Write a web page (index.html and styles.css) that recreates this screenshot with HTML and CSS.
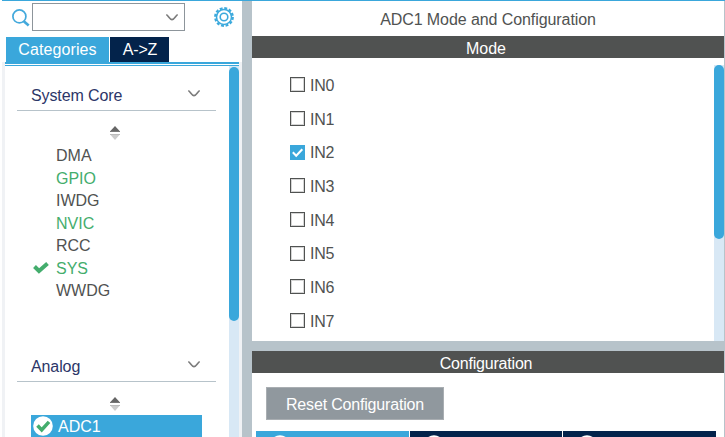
FILE: index.html
```html
<!DOCTYPE html>
<html lang="en">
<head>
<meta charset="utf-8">
<title>ADC1 Mode and Configuration</title>
<link rel="stylesheet" href="styles.css">
</head>
<body>
<svg width="0" height="0" class="defs">
  <symbol id="chevron" viewBox="0 0 12 7"><path d="M.3.6 C2.5 1.7 3.5 5.6 6 5.6 S9.5 1.7 11.7.6" fill="none" stroke="#7b7b7b" stroke-width="1.6"/></symbol>
  <symbol id="sort" viewBox="0 0 10 14"><path d="M5 0 9.6 5H.4z" fill="#666"/><path d="M0 5.5h10" stroke="#777"/><path d="M0 8.5h10" stroke="#bbb"/><path d="M.6 9h8.8L5 14z" fill="#ccc"/></symbol>
  <symbol id="ok" viewBox="0 0 20 20"><circle cx="10" cy="10" r="9.8" fill="#fff"/><path d="M4.5 9.5 8.7 14 16 5.8" fill="none" stroke="#44ad6d" stroke-width="3.5"/></symbol>
</svg>
<div class="app">
  <aside class="sidebar">
    <div class="search">
      <svg class="lens" viewBox="0 0 18 18"><circle cx="7.4" cy="7.4" r="6.5" fill="none" stroke="#43a9dc" stroke-width="1.7"/><path d="M11.5 12 16.7 16.5" stroke="#43a9dc" stroke-width="2.6"/></svg>
      <div class="combo"><svg class="chev"><use href="#chevron"/></svg></div>
      <svg class="gear" viewBox="0 0 20 20" fill="none" stroke="#3ba9dc"><circle cx="10" cy="10" r="8.8" stroke-width="2.2" stroke-dasharray="2.9 1.71"/><circle cx="10" cy="10" r="7.5" stroke-width="1.5"/><circle cx="10" cy="10" r="3.8" stroke-width="1.6"/></svg>
    </div>
    <div class="tabs"><span class="tab on">Categories</span><span class="tab">A-&gt;Z</span></div>
    <div class="tree">
      <div class="groups">
        <section class="group core">
          <h2>System Core<svg class="chev"><use href="#chevron"/></svg></h2>
          <svg class="sort"><use href="#sort"/></svg>
          <ul>
            <li>DMA</li>
            <li class="set">GPIO</li>
            <li>IWDG</li>
            <li class="set">NVIC</li>
            <li>RCC</li>
            <li class="set"><svg class="tick" viewBox="0 0 16 12"><path d="M1.5 4.5 6 9 14.5 1.5" fill="none" stroke="#44ad6d" stroke-width="4"/></svg>SYS</li>
            <li>WWDG</li>
          </ul>
        </section>
        <section class="group">
          <h2>Analog<svg class="chev"><use href="#chevron"/></svg></h2>
          <svg class="sort"><use href="#sort"/></svg>
          <div class="selected"><svg class="ok"><use href="#ok"/></svg>ADC1</div>
        </section>
      </div>
      <div class="track"><div class="thumb"></div></div>
    </div>
  </aside>
  <main class="detail">
    <h1>ADC1 Mode and Configuration</h1>
    <div class="bar mode-bar">Mode</div>
    <div class="mode">
      <div class="inputs">
        <label><i class="box"></i><span>IN0</span></label>
        <label><i class="box"></i><span>IN1</span></label>
        <label><i class="box checked"><svg viewBox="0 0 15 15"><path d="M2.8 7.2 6.2 10.8 12.3 4.2" fill="none" stroke="#fff" stroke-width="2"/></svg></i><span>IN2</span></label>
        <label><i class="box"></i><span>IN3</span></label>
        <label><i class="box"></i><span>IN4</span></label>
        <label><i class="box"></i><span>IN5</span></label>
        <label><i class="box"></i><span>IN6</span></label>
        <label><i class="box"></i><span>IN7</span></label>
      </div>
      <div class="track"><div class="thumb"></div></div>
    </div>
    <div class="splitter"></div>
    <div class="bar">Configuration</div>
    <div class="config">
      <button class="reset">Reset Configuration</button>
      <div class="cards">
        <div class="card on"><svg class="ok"><use href="#ok"/></svg></div>
        <div class="card"><svg class="ok"><use href="#ok"/></svg></div>
        <div class="card"><svg class="ok"><use href="#ok"/></svg></div>
      </div>
    </div>
  </main>
</div>
</body>
</html>
```
FILE: styles.css
```css
* { box-sizing: border-box; margin: 0; padding: 0; }
body { width: 725px; height: 437px; overflow: hidden; background: #fff; color: #505251; font: 16px/22px "Liberation Sans", Arial, sans-serif; }
svg { display: block; flex: none; }
.defs { position: absolute; }
.app { display: flex; height: 437px; margin-left: 2px; border-top: 1px solid #3aa7db; }

.sidebar { width: 240px; flex: none; display: flex; flex-direction: column; }
.search { flex: none; display: flex; height: 36px; padding: 2px 0 0 10px; }
.lens { width: 18px; height: 18px; margin: 6px 2px 0 0; }
.combo { width: 153px; height: 28px; border: 1px solid #8d959b; display: flex; justify-content: flex-end; padding: 10px 6px 0 0; }
.chev { width: 12px; height: 7px; }
.gear { width: 20px; height: 20px; margin: 4px 0 0 29px; }
.tabs { flex: none; display: flex; gap: 1px; padding-left: 4px; height: 25px; line-height: 25px; color: #fff; }
.tab { width: 59px; background: #03234b; text-align: center; letter-spacing: -.2px; padding-left: 1px; }
.tab.on { width: 103px; background: #3aa7db; letter-spacing: .1px; padding-left: 0; }

.tree { flex: 1; min-height: 0; overflow: hidden; display: flex; border: solid #f0f2f5; border-width: 0 3px; background: linear-gradient(#3aa7db 2px, #fff 2px, #fff 3px, #3aa7db 3px, #3aa7db 4px, transparent 4px) border-box; }
.groups { width: 224px; padding: 18px 0 0 12px; }
.group { width: 199px; }
.core { height: 271px; }
h2 { display: flex; justify-content: space-between; align-items: center; height: 31px; padding: 1px 16px 0 14px; border-bottom: 1px solid #b7c3ca; font-size: 16px; font-weight: 400; color: #2c3668; letter-spacing: -.1px; }
h2 .chev { margin-top: -4px; }
.sort { width: 10px; height: 14px; margin: 15px auto 4px 93px; }
ul { list-style: none; padding: 1px 0 0 15px; }
li { height: 22.5px; line-height: 22.5px; padding-left: 24px; display: flex; }
.set { color: #44ad6d; }
.tick { width: 16px; height: 12px; margin: 4px 7px 0 -23px; }
.selected { width: 171px; height: 23px; margin-left: 14px; background: #3aa7db; color: #fff; display: flex; gap: 5px; padding-left: 2px; line-height: 23px; }
.ok { width: 20px; height: 20px; margin-top: 1px; }

.track { display: flow-root; width: 10px; flex: none; background: #d8e8f5; }
.thumb { border-radius: 5px; background: #3aa7db; }
.tree .track { margin-top: 4px; }
.tree .thumb { height: 254px; margin-top: 1px; }

.detail { flex: 1; border-left: 10px solid #b7c3ca; border-right: 1px solid #b7c3ca; display: flex; flex-direction: column; }
h1 { height: 35px; line-height: 38px; text-align: center; font-size: 16px; font-weight: 400; letter-spacing: -.08px; }
.bar { height: 22px; line-height: 26px; background: #505251; color: #fff; text-align: center; padding-right: 4px; letter-spacing: -.2px; }
.mode-bar { letter-spacing: 0; }
.mode { height: 283px; display: flex; justify-content: space-between; }
.inputs { padding: 10px 0 0 38px; }
label { height: 33.7px; display: flex; align-items: center; gap: 5px; letter-spacing: -.2px; }
label span { padding-top: 2px; }
.box { width: 15px; height: 15px; border: 1px solid #505251; box-shadow: inset 0 0 0 1px #d5d5d5; }
.checked { background: #3aa7db; border-color: #3aa7db; box-shadow: none; }
.checked svg { width: 15px; height: 15px; margin: -1px; }
.mode .track { margin-top: 7px; }
.mode .thumb { height: 174px; }
.splitter { height: 10px; background: #b7c3ca; }
.config { flex: 1; padding: 14px 8px 0 4px; overflow: hidden; }
.reset { display: block; width: 178px; height: 33px; margin-left: 10px; border: 1px solid #a9aeb2; background: #90989e; color: #fff; font: inherit; line-height: 33px; letter-spacing: -.18px; }
.cards { display: grid; grid-template-columns: 153px 152px 153px; gap: 1px; margin-top: 11px; }
.card { height: 26px; padding: 4px 0 0 14px; background: #03234b; }
.card.on { background: #3aa7db; }
.card .ok { margin: 0; }
```
